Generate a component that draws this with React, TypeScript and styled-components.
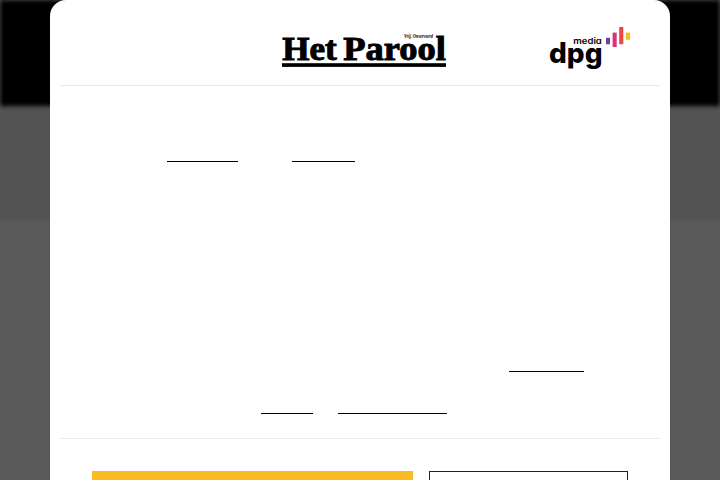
import React from "react";
import styled, { createGlobalStyle } from "styled-components";

const Global = createGlobalStyle`
  *{box-sizing:border-box}
  body{margin:0;background:#595959;overflow:hidden;font-family:"Liberation Sans",Arial,sans-serif}
`;

const Screen = styled.main`
  position: relative;
  height: 480px;
  overflow: hidden;
`;

const Backdrop = styled.div`
  position: absolute;
  inset: 0;
  display: flex;
  flex-direction: column;
  filter: blur(2px);
`;

const Band = styled.div<{ $height: number; $color: string }>`
  flex: none;
  height: ${(p) => p.$height}px;
  background: ${(p) => p.$color};
`;

const Dialog = styled.section`
  position: relative;
  width: 620px;
  height: 500px;
  margin: 0 auto;
  padding: 0 10px;
  background: #fff;
  border-radius: 16px 16px 0 0;
`;

const Header = styled.header`
  display: grid;
  grid-template-columns: 222px 1fr 110px;
  height: 86px;
  padding-top: 25px;
  border-bottom: 1px solid #e9e9e9;

  svg {
    display: block;
    overflow: visible;
  }
`;

const Copy = styled.div`
  height: 353px;
  padding: 75px 32px 0;
  border-bottom: 1px solid #e9e9e9;
`;

const Line = styled.div<{ $gap?: number }>`
  display: flex;
  height: 1px;
  margin-bottom: ${(p) => p.$gap ?? 0}px;
`;

const LinkRule = styled.a<{ $width: number; $before: number }>`
  width: ${(p) => p.$width}px;
  margin-left: ${(p) => p.$before}px;
  background: #000;
`;

const Actions = styled.footer`
  display: flex;
  gap: 16px;
  padding: 32px 32px 0;
`;

const Button = styled.button<{ $primary?: boolean }>`
  width: ${(p) => (p.$primary ? 321 : 199)}px;
  height: 44px;
  padding: 0;
  border: ${(p) => (p.$primary ? "0" : "1px solid #222")};
  background: ${(p) => (p.$primary ? "#fabb22" : "#fff")};
`;

const Masthead = () => (
  <svg width="164" height="45" viewBox="282 25 164 45" role="img">
    <g fontFamily="Liberation Serif, serif" fontWeight="700">
      <g fontSize="34" stroke="#000" strokeWidth="1">
        <text x="282.3" y="59.6" textLength="54.5" lengthAdjust="spacingAndGlyphs">Het</text>
        <text x="343.3" y="59.6" textLength="102.5" lengthAdjust="spacingAndGlyphs">Parool</text>
      </g>
      <text x="404" y="38" fontSize="5.2" fontStyle="italic" textLength="29" lengthAdjust="spacingAndGlyphs">Vrij, Onverveerd</text>
    </g>
    <rect x="282" y="63.2" width="164" height="3.7" />
  </svg>
);

const Publisher = () => (
  <svg width="90" height="50" viewBox="550 25 90 50" role="img">
    <g fontFamily="Inter, sans-serif">
      <text x="549" y="62.6" fontSize="27.8" fontWeight="800" textLength="53.5" lengthAdjust="spacingAndGlyphs">dpg</text>
      <text x="573.3" y="44.2" fontSize="8" fontWeight="600" textLength="28.5" lengthAdjust="spacingAndGlyphs" style={{ fontFeatureSettings: '"cv11"' }}>media</text>
    </g>
    <rect x="606" y="37.8" width="4" height="6.5" fill="#743d96" />
    <rect x="612.6" y="32.6" width="4.1" height="14.4" fill="#d6337c" />
    <rect x="619.2" y="27" width="4.1" height="17.2" fill="#e94742" />
    <rect x="625.8" y="32.6" width="4.2" height="7.2" fill="#fabb22" />
  </svg>
);

export default function App() {
  return (
    <>
      <Global />
      <Screen>
        <Backdrop>
          <Band $height={106} $color="#000" />
          <Band $height={114} $color="#525252" />
          <Band $height={260} $color="#595959" />
        </Backdrop>
        <Dialog>
          <Header>
            <span />
            <Masthead />
            <Publisher />
          </Header>
          <Copy>
            <Line $gap={209}>
              <LinkRule $before={75} $width={71.3} />
              <LinkRule $before={53.9} $width={63.2} />
            </Line>
            <Line $gap={41}>
              <LinkRule $before={416.6} $width={75.4} />
            </Line>
            <Line>
              <LinkRule $before={169} $width={52.3} />
              <LinkRule $before={24.5} $width={109} />
            </Line>
          </Copy>
          <Actions>
            <Button $primary />
            <Button />
          </Actions>
        </Dialog>
      </Screen>
    </>
  );
}
